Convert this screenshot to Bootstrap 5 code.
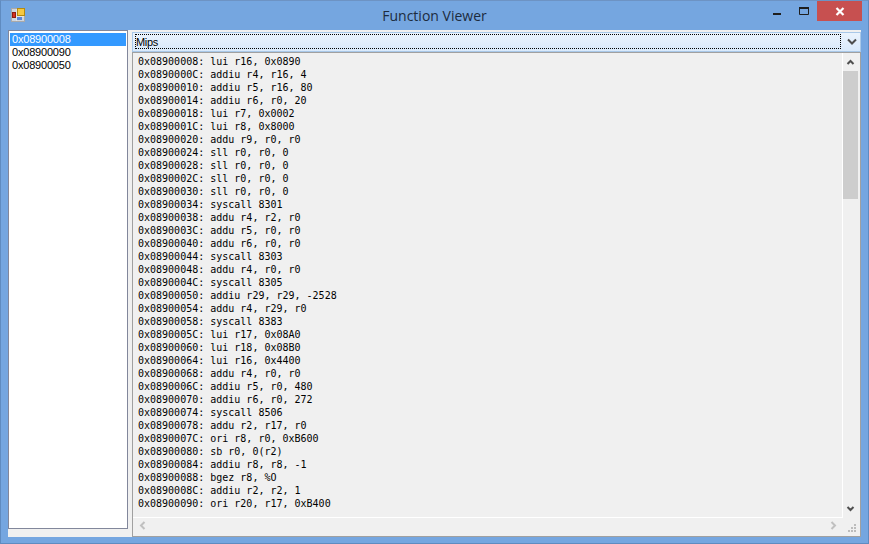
<!DOCTYPE html>
<html><head><meta charset="utf-8"><title>Function Viewer</title>
<link rel="stylesheet" href="https://cdn.jsdelivr.net/npm/bootstrap@5.3.0/dist/css/bootstrap.min.css">
<style>
html,body{margin:0;height:544px;width:869px;overflow:hidden;background:#75a6e0}
.win{width:869px;height:544px;border:1px solid #5f8bc0;border-top-color:#6d93c4;background:#75a6e0}
.tbar{height:29px;position:relative}
.ttl{font:14px/1 "Open Sans","Liberation Sans",sans-serif;color:#1c2b3e;padding-top:8px}
.appi{position:absolute;left:10px;top:7px}
.wbtns{position:absolute;right:6px;top:0;height:20px}
.wb{width:31px;height:20px}
.wbx{width:45px;height:20px;background:#c75050}
.client{margin:0 7px 7px 7px;height:507px;background:#f0f0f0;gap:4px}
.lbox{width:120px;height:499px;background:#fff;border:1px solid #82879b;padding:2px 1px;font:11px/13px "Liberation Sans",sans-serif;letter-spacing:-.2px;color:#000;flex:none}
.lit{height:13px;padding-left:2px}
.lsel{background:#3399ff;color:#fff}
.rpane{width:729px;flex:none}
.cmb{height:20px;margin-top:2px;background:linear-gradient(#eaf3fd,#d9e9fb);border:1px solid #a9c8e8;position:relative;width:729px;padding:1px 2px}
.cmbt{width:706px;height:15px;border:1px dotted #000;font:11px/15px "Liberation Sans",sans-serif;letter-spacing:-.3px;color:#000}
.cmba{position:absolute;right:3px;top:5px}
.tbx{width:729px;height:485px;background:#f0f0f0;border:1px solid #a0a0a0;position:relative;overflow:hidden}
.tin{width:710px;height:465px;overflow:hidden;border-right:1px solid #fff;border-bottom:1px solid #fff;position:relative;flex:none}
.code{margin:0;padding:2px 0 0 5px;font:10px/13px "DejaVu Sans Mono",monospace;color:#000;overflow:hidden;height:464px;white-space:pre}
.vs{width:17px;height:465px;position:relative;flex:none}
.thumb{position:absolute;left:0;top:18px;width:15px;height:128px;background:#cdcdcd}
.ua{position:absolute;left:3px;top:6px}
.da{position:absolute;left:3px;bottom:6px}
.hs{height:18px;position:relative}
.la{position:absolute;left:6px;top:3px}
.ra{position:absolute;right:23px;top:3px}
.grip{position:absolute;right:3px;bottom:3px}
</style></head><body>
<div class="win">
<div class="tbar text-center">
<svg class="appi" width="14" height="14" viewBox="0 0 14 14"><rect x=".5" y=".5" width="13" height="13" fill="#cfd6e0" stroke="#a9a9a9"/><path d="M5.500 1v12M1 8.500h12" stroke="#e4e4e4"/><rect x="6" y="0" width="8" height="8" fill="#b58a10"/><rect x="7" y="1" width="6" height="6" fill="#f5c842"/><rect x="1" y="4" width="4" height="6" fill="#8c1c14"/><rect x="2" y="5" width="2" height="4" fill="#d6301f"/><rect x="6" y="9" width="5" height="3" fill="#5b86d6"/></svg>
<div class="ttl">Function Viewer</div>
<div class="wbtns d-flex">
<div class="wb"><svg class="d-block" width="31" height="20" viewBox="0 0 31 20"><rect x="18" y="12" width="8" height="2" fill="#1e1e1e"/></svg></div>
<div class="wb"><svg class="d-block" width="31" height="20" viewBox="0 0 31 20"><path d="M13.500 6.500h9v7h-9z" fill="none" stroke="#1e1e1e"/><rect x="13" y="6" width="10" height="2" fill="#1e1e1e"/></svg></div>
<div class="wbx"><svg class="d-block" width="45" height="20" viewBox="0 0 45 20"><path d="M19.500 7l7 7M26.500 7l-7 7" stroke="#fff" stroke-width="2.200" fill="none"/></svg></div>
</div>
</div>
<div class="client d-flex">
<div class="lbox"><div class="lit lsel">0x08900008</div><div class="lit">0x08900090</div><div class="lit">0x08900050</div></div>
<div class="rpane">
<div class="cmb"><div class="cmbt">Mips</div><svg class="cmba" width="10" height="8" viewBox="0 0 10 8"><path d="M1 1.500l4 4 4-4" stroke="#4d4d4d" stroke-width="2" fill="none"/></svg></div>
<div class="tbx">
<div class="d-flex">
<div class="tin"><pre class="code">0x08900008: lui r16, 0x0890
0x0890000C: addiu r4, r16, 4
0x08900010: addiu r5, r16, 80
0x08900014: addiu r6, r0, 20
0x08900018: lui r7, 0x0002
0x0890001C: lui r8, 0x8000
0x08900020: addu r9, r0, r0
0x08900024: sll r0, r0, 0
0x08900028: sll r0, r0, 0
0x0890002C: sll r0, r0, 0
0x08900030: sll r0, r0, 0
0x08900034: syscall 8301
0x08900038: addu r4, r2, r0
0x0890003C: addu r5, r0, r0
0x08900040: addu r6, r0, r0
0x08900044: syscall 8303
0x08900048: addu r4, r0, r0
0x0890004C: syscall 8305
0x08900050: addiu r29, r29, -2528
0x08900054: addu r4, r29, r0
0x08900058: syscall 8383
0x0890005C: lui r17, 0x08A0
0x08900060: lui r18, 0x08B0
0x08900064: lui r16, 0x4400
0x08900068: addu r4, r0, r0
0x0890006C: addiu r5, r0, 480
0x08900070: addiu r6, r0, 272
0x08900074: syscall 8506
0x08900078: addu r2, r17, r0
0x0890007C: ori r8, r0, 0xB600
0x08900080: sb r0, 0(r2)
0x08900084: addiu r8, r8, -1
0x08900088: bgez r8, %O
0x0890008C: addiu r2, r2, 1
0x08900090: ori r20, r17, 0xB400</pre></div>
<div class="vs"><svg class="ua" width="9" height="7" viewBox="0 0 9 7"><path d="M1.500 5l3-3 3 3" stroke="#505050" stroke-width="2" fill="none"/></svg><div class="thumb"></div><svg class="da" width="9" height="7" viewBox="0 0 9 7"><path d="M1.500 2l3 3 3-3" stroke="#505050" stroke-width="2" fill="none"/></svg></div>
</div>
<div class="hs"><svg class="la" width="7" height="9" viewBox="0 0 7 9"><path d="M5.500 1l-3.500 3.500 3.500 3.500" stroke="#c0c0c0" stroke-width="2" fill="none"/></svg><svg class="ra" width="7" height="9" viewBox="0 0 7 9"><path d="M1.500 1l3.500 3.500-3.500 3.500" stroke="#c0c0c0" stroke-width="2" fill="none"/></svg><svg class="grip" width="10" height="10" viewBox="0 0 10 10" fill="#bcbcbc"><rect x="7" y="1" width="2" height="2"/><rect x="4" y="4" width="2" height="2"/><rect x="7" y="4" width="2" height="2"/><rect x="1" y="7" width="2" height="2"/><rect x="4" y="7" width="2" height="2"/><rect x="7" y="7" width="2" height="2"/></svg></div>
</div>
</div>
</div>
</div>
<script src="https://cdn.jsdelivr.net/npm/bootstrap@5.3.0/dist/js/bootstrap.bundle.min.js"></script>
</body></html>
